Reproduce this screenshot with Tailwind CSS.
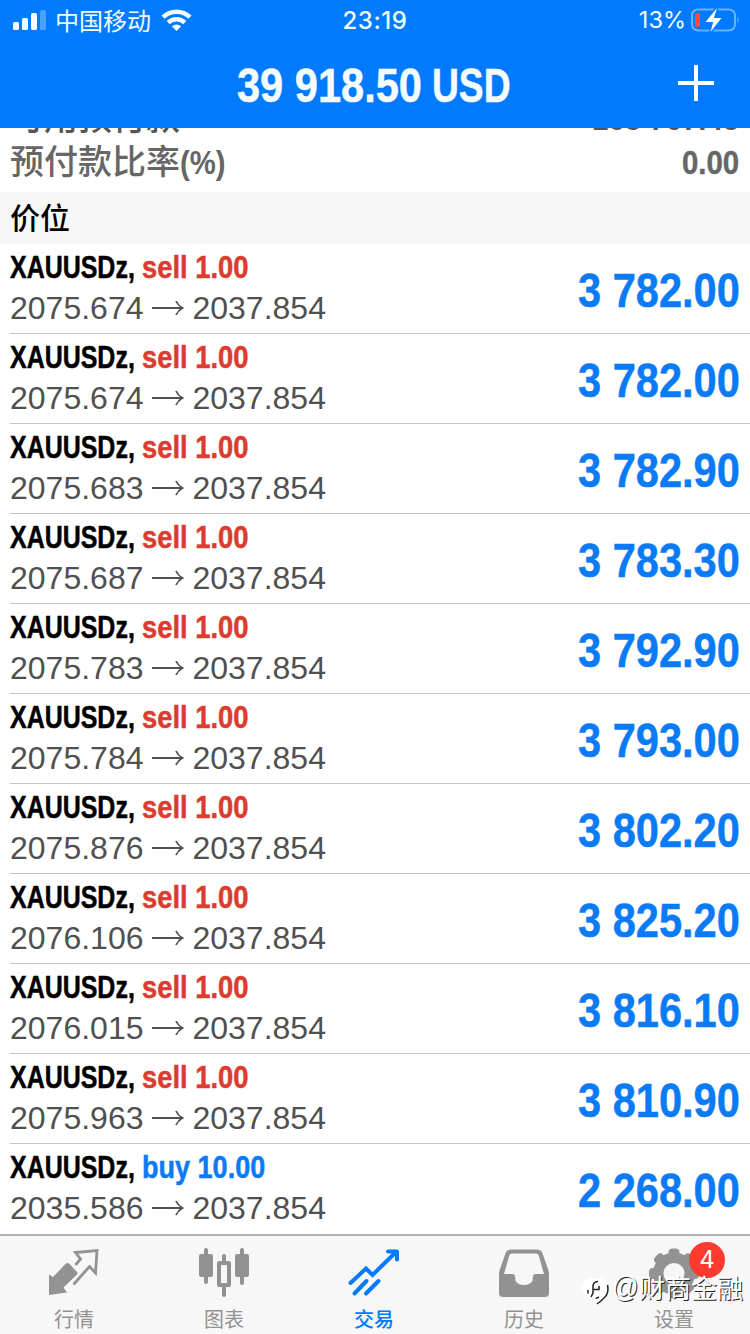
<!DOCTYPE html>
<html lang="zh-CN">
<head>
<meta charset="utf-8">
<title>交易</title>
<script src="https://cdn.jsdelivr.net/npm/@tailwindcss/browser@4"></script>
</head>
<body class="w-[750px] h-[1334px] overflow-hidden bg-white font-['Liberation_Sans','Noto_Sans_CJK_SC',sans-serif] text-black flex flex-col">

<header class="h-[128px] shrink-0 bg-[#007aff] text-[#f4fcff] relative z-10">
  <div class="h-10 grid grid-cols-3 items-center">
    <div class="flex items-center pl-3 -mt-[2px]">
      <svg class="w-[34px] h-[20px]" viewBox="0 0 34 20" fill="currentColor"><rect x="1" y="12" width="6" height="8" rx="1.6"/><rect x="10" y="8" width="6" height="12" rx="1.6"/><rect x="19" y="3" width="6" height="17" rx="1.6"/><rect x="28" y="0" width="6" height="20" rx="1.6" opacity=".3"/></svg>
      <span class="ml-[9px] text-[24px] leading-10 font-['Noto_Sans_CJK_SC',sans-serif] w-[98px] whitespace-nowrap">中国移动</span>
      <svg class="ml-[8px] w-[31px] h-[22px]" viewBox="0 0 31 22"><g fill="none" stroke="currentColor" stroke-width="4.400"><path d="M2 8.200a19.500 19.500 0 0 1 27 0"/><path d="M7.200 13.600a12 12 0 0 1 16.600 0"/></g><path fill="currentColor" d="M10.800 17.300a7 7 0 0 1 9.400 0L15.500 22z"/></svg>
    </div>
    <div class="text-center text-[24px] leading-[42px] font-['Inter',sans-serif] font-medium tracking-[0.6px]">23:19</div>
    <div class="flex items-center justify-end pr-[10px] -mt-[2px]">
      <span class="text-[23.5px] leading-[42px] font-['Inter',sans-serif]">13%</span>
      <svg class="ml-[5px] w-[49px] h-[26px]" viewBox="0 0 49 26"><rect x="1" y="2.500" width="43" height="21" rx="6" fill="none" stroke="#fff" stroke-opacity=".42" stroke-width="2"/><path d="M46.500 9.500q2.400 3.500 0 7" fill="#fff" opacity=".45"/><rect x="4" y="6" width="5" height="14" rx="2" fill="#ff4a3d"/><path d="M26 1 14.500 15h7.700L19.500 25 30.500 11h-7.600z" fill="#fff" stroke="#007aff" stroke-width="3" paint-order="stroke"/></svg>
    </div>
  </div>
  <div class="h-[88px] grid grid-cols-[237px_1fr_237px] items-center">
    <span></span>
    <div class="flex text-[48px] leading-[88px] font-bold whitespace-nowrap h-[88px] pt-[2px] [-webkit-text-stroke:0.5px_currentColor]">
      <span class="w-[195px] origin-left scale-x-[0.866]">39 918.50</span><span class="w-[80px] origin-left scale-x-[0.775]">USD</span>
    </div>
    <svg class="w-[36px] h-[36px] justify-self-end mr-[36px] mb-[2px]" viewBox="0 0 36 36" fill="none" stroke="#fff" stroke-width="4"><path d="M18 0v36M0 18h36"/></svg>
  </div>
</header>

<main class="flex-1 min-h-0 overflow-hidden">
  <section class="h-[64px] overflow-hidden flex flex-col justify-end text-[#666]">
    <div class="h-[44px] shrink-0 flex justify-between pl-[10px] pr-[11px] text-[34px] leading-[44px] font-medium text-[#555]">
      <span class="whitespace-nowrap">可用预付款</span><span class="font-bold whitespace-nowrap origin-right scale-x-[0.865] leading-[44px]">163 767.43</span>
    </div>
    <div class="h-[44px] shrink-0 flex justify-between pl-[10px] pr-[11px] text-[34px] leading-[44px] font-medium mb-[8px]">
      <span class="whitespace-nowrap flex">预付款比率<span class="font-bold origin-left scale-x-[0.86] w-[60px]">(%)</span></span><span class="font-bold whitespace-nowrap origin-right scale-x-[0.865] [-webkit-text-stroke:0.4px_currentColor]">0.00</span>
    </div>
  </section>
  <h2 class="h-[52px] bg-[#f7f7f7] pl-[10px] text-[30px] leading-[54px] font-medium">价位</h2>
  <ul id="positions"></ul>
</main>

<nav class="h-[100px] shrink-0 bg-[#f7f7f7] border-t-2 border-[#b2b2b2] relative">
  <div class="grid grid-cols-5 w-[750px] -ml-px text-[#929292] text-[20px] leading-[30px] text-center">
    <a class="flex flex-col items-center pt-[12px]">
      <svg class="w-[52px] h-[52px]" viewBox="0 0 52 52"><path d="M1 26.500 5 29 18 15.500q2-1 3.500.500l7.500 8q1 1.500 0 2.500L15.500 39.500l3.500 5-18 2.500z" fill="currentColor"/><path d="m27.500 17 5-6-5-6.500L49 2.500 47.500 25l-6-6.500L25.500 36.500" fill="none" stroke="currentColor" stroke-width="2.800"/></svg>
      <span class="pt-[5px]">行情</span>
    </a>
    <a class="flex flex-col items-center pt-[12px]">
      <svg class="w-[52px] h-[52px]" viewBox="0 0 52 52" fill="currentColor"><rect x="1" y="6" width="14" height="23" rx="2"/><rect x="6" y="0" width="4" height="36" rx="2"/><rect x="37" y="6" width="14" height="23" rx="2"/><rect x="42" y="0" width="4" height="37" rx="2"/><path d="M24 13v-5q0-2 2-2t2 2v5h3q2 0 2 2v22q0 2-2 2h-3v8q0 2-2 2t-2-2v-8h-3q-2 0-2-2V15q0-2 2-2zm-1 4v18h6V17z" fill-rule="evenodd"/></svg>
      <span class="pt-[5px]">图表</span>
    </a>
    <a class="flex flex-col items-center pt-[12px] text-[#007aff]">
      <svg class="w-[52px] h-[52px]" viewBox="0 0 52 52" fill="none" stroke="currentColor" stroke-width="4" stroke-linecap="round"><path d="M2.500 35 18 20.500l6.500 6.500L48 4"/><path d="M40 3.500h9v8" stroke-linejoin="round"/><path d="M6.500 45.500 18.500 33M18 45.500 30.500 33"/></svg>
      <span class="pt-[5px] font-medium">交易</span>
    </a>
    <a class="flex flex-col items-center pt-[12px]">
      <svg class="w-[52px] h-[52px]" viewBox="0 0 52 52"><path fill="currentColor" fill-rule="evenodd" d="M13 1.500h26q4 0 5.500 4L50 21q1 3 1 6v18q0 4-4 4H5q-4 0-4-4V27q0-3 1-6L7.500 5.500Q9 1.500 13 1.500zm1 4q-2 0-2.700 2L6 26h8.500q2.500 0 2.500 3 0 8 9 8t9-8q0-3 2.500-3H46L40.700 7.500q-.7-2-2.700-2z"/></svg>
      <span class="pt-[5px]">历史</span>
    </a>
    <a class="flex flex-col items-center pt-[12px]">
      <svg class="w-[52px] h-[52px]" viewBox="0 0 52 52"><g fill="currentColor"><circle cx="26" cy="25.500" r="21"/><g id="teeth"></g></g><circle cx="26" cy="25.500" r="10.500" fill="#f7f7f7"/></svg>
      <span class="pt-[5px]">设置</span>
    </a>
  </div>
  <span class="absolute left-[689px] top-[6px] size-[36px] rounded-full bg-[#ff3b30] text-white text-[24px] leading-[36px] text-center font-['Inter',sans-serif]">4</span>
  <div class="absolute left-[581px] top-[34px] flex items-center text-white">
    <svg class="w-[28px] h-[34px]" viewBox="0 0 28 34"><path d="M11 5Q1 6 1 16q0 8 9 9h6q2 3 0 6 11-3 11-15Q27 4 16 5z" fill="#fff"/><path d="M7 20.500v-3.500M10 24l2-4V12.500q1-4 5-4M12.500 16.500h5.500v-3.500M26.500 12q2 9-4.500 14-3 3-6 5M18 24q-3 1-3 2" fill="none" stroke="#222" stroke-width="1.500"/></svg>
    <span class="ml-[3px] text-[29px] leading-[34px] mb-[5px] w-[27px] whitespace-nowrap [text-shadow:1px_1px_0.5px_#222] origin-left scale-x-[0.9] font-['Liberation_Sans',sans-serif]">@</span>
    <span class="text-[26px] leading-[34px] mb-[5px] font-['Noto_Sans_CJK_SC',sans-serif] whitespace-nowrap [text-shadow:1px_1px_0.5px_#222]">财商金融</span>
  </div>
</nav>

<script>
const rows = [
  ['sell 1.00', '2075.674', '3 782.00'],
  ['sell 1.00', '2075.674', '3 782.00'],
  ['sell 1.00', '2075.683', '3 782.90'],
  ['sell 1.00', '2075.687', '3 783.30'],
  ['sell 1.00', '2075.783', '3 792.90'],
  ['sell 1.00', '2075.784', '3 793.00'],
  ['sell 1.00', '2075.876', '3 802.20'],
  ['sell 1.00', '2076.106', '3 825.20'],
  ['sell 1.00', '2076.015', '3 816.10'],
  ['sell 1.00', '2075.963', '3 810.90'],
  ['buy 10.00', '2035.586', '2 268.00']
];
document.getElementById('positions').innerHTML = rows.map(([side, open, profit], i) => `
  <li class="h-[90px] ml-[10px] pr-[10px] flex justify-between whitespace-nowrap ${i < rows.length - 1 ? 'border-b border-[#c4c4c6]' : ''}">
    <div class="pt-[3px]">
      <div class="flex h-[41px] text-[32px] leading-10 font-bold [-webkit-text-stroke:0.5px_currentColor]">
        <span class="w-[132px] origin-left scale-x-[0.78]">XAUUSDz,</span>
        <span class="origin-left ${side[0] === 's' ? 'scale-x-[0.855] text-[#dc3c2e]' : 'scale-x-[0.845] text-[#0a7af5]'}">${side}</span>
      </div>
      <div class="flex items-center h-10 text-[32px] leading-10 text-[#505050]">
        <span>${open}</span>
        <svg class="w-[32px] h-[18px] ml-[9px] mr-[8px]" viewBox="0 0 32 18" fill="none" stroke="currentColor" stroke-width="1.800"><path d="M0 9h30M24 2q2 4.500 6.500 7-4.500 2.500-6.500 7"/></svg>
        <span>2037.854</span>
      </div>
    </div>
    <div class="text-[48px] leading-[94px] font-bold text-[#0a7af5] origin-right scale-x-[0.866] [-webkit-text-stroke:0.5px_currentColor]">${profit}</div>
  </li>`).join('');

document.getElementById('teeth').innerHTML = Array.from({length: 8}, (_, k) =>
  `<rect x="20.500" y="0.500" width="11" height="14" rx="4" transform="rotate(${k * 45} 26 25.500)"/>`).join('');
</script>
</body>
</html>
